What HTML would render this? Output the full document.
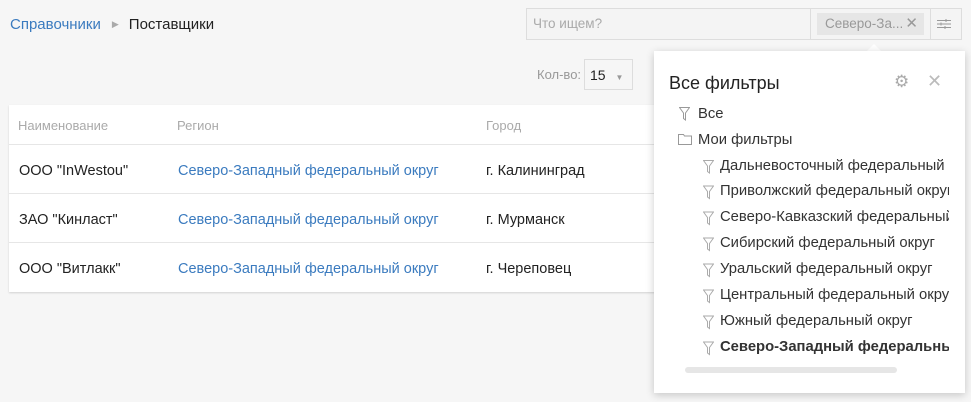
<!DOCTYPE html>
<html><head><meta charset="utf-8"><style>
*{box-sizing:border-box;margin:0;padding:0}
body{width:971px;height:402px;background:#f6f6f6;font-family:"Liberation Sans","DejaVu Sans",sans-serif;font-size:13px;color:#222;position:relative;overflow:hidden}
.abs{position:absolute}
.bc{left:10px;top:16px;font-size:15px}
.bc a{color:#3b7bbf}
.search{left:526px;top:8px;width:436px;height:32px;border:1px solid #ddd;background:#f4f4f4}
.search .ph{left:6px;top:7px;color:#aaa;font-size:13.5px}
.search .div1{left:283px;top:0;width:1px;height:30px;background:#ddd}
.search .div2{left:403px;top:0;width:1px;height:30px;background:#ddd}
.chip{left:290px;top:4px;width:107px;height:22px;background:#e6e6e6;color:#999;font-size:13.5px;padding:3px 0 0 8px}
.tbl{left:9px;top:105px;width:660px;height:187px;background:#fff;box-shadow:0 1px 2px rgba(0,0,0,.15)}
.row{position:absolute;left:0;width:660px;border-bottom:1px solid #e6e6e6}
.row span{position:absolute;font-size:14.5px}
.hd span{color:#aaa;font-size:13px}
.lnk{color:#3b7bbf}
.pop{left:654px;top:51px;width:311px;height:342px;background:#fff;box-shadow:0 2px 8px rgba(0,0,0,.2)}
.pop .it{position:absolute;left:66px;font-size:14.8px;color:#333;white-space:nowrap;width:229px;overflow:hidden}
</style></head><body>
<div class="abs bc"><a>Справочники</a><span style="color:#aaa;font-size:9px;margin:0 10px 0 11px;position:relative;top:-2px">▶</span><span>Поставщики</span></div>
<div class="abs search">
<div class="abs ph">Что ищем?</div>
<div class="abs div1"></div>
<div class="abs chip">Северо-За...<span style="position:absolute;right:6px;top:1px;font-size:15px">✕</span></div>
<div class="abs div2"></div>
<svg class="abs" style="left:410px;top:9px" width="14" height="12" viewBox="0 0 14 12" stroke="#999" fill="none"><path d="M0 2.5h14M0 6h14M0 9.5h14M9 1v3M4 4.5v3M8 8v3"/></svg>
</div>
<div class="abs" style="left:537px;top:67px;color:#999">Кол-во:</div>
<div class="abs" style="left:584px;top:59px;width:49px;height:31px;border:1px solid #ddd;background:#f6f6f6;padding:7px 0 0 5px;font-size:14px">15 <span style="color:#999;font-size:8px;margin-left:6px">▼</span></div>
<div class="abs tbl">
<div class="row hd" style="top:0;height:40px"><span style="left:9px;top:13px">Наименование</span><span style="left:168px;top:13px">Регион</span><span style="left:477px;top:13px">Город</span></div>
<div class="row" style="top:40px;height:49px"><span style="left:10px;top:18px">ООО "InWestou"</span><span class="lnk" style="left:169px;top:18px">Северо-Западный федеральный округ</span><span style="left:477px;top:18px">г. Калининград</span></div>
<div class="row" style="top:89px;height:49px"><span style="left:10px;top:18px">ЗАО "Кинласт"</span><span class="lnk" style="left:169px;top:18px">Северо-Западный федеральный округ</span><span style="left:477px;top:18px">г. Мурманск</span></div>
<div class="row" style="top:138px;height:49px;border:none"><span style="left:10px;top:18px">ООО "Витлакк"</span><span class="lnk" style="left:169px;top:18px">Северо-Западный федеральный округ</span><span style="left:477px;top:18px">г. Череповец</span></div>
</div>
<div class="abs" style="left:866px;top:44px;width:0;height:0;border-left:8px solid transparent;border-right:8px solid transparent;border-bottom:8px solid #fff"></div>
<div class="abs pop">
<div class="abs" style="left:15px;top:22px;font-size:18px;color:#222">Все фильтры</div>
<div class="abs" style="left:240px;top:21px;color:#aaa;font-size:17px">⚙</div>
<div class="abs" style="left:273px;top:20px;color:#bbb;font-size:18px">✕</div>
<svg class="abs" style="left:25px;top:56px" width="11" height="14" viewBox="0 0 11 14" fill="none" stroke="#999"><path d="M.5 .5h10L6.5 6v7l-2-1.5V6z"/></svg>
<div class="abs" style="left:44px;top:55px;font-size:14.8px;color:#333">Все</div>
<svg class="abs" style="left:24px;top:83px" width="14" height="11" viewBox="0 0 14 11" fill="none" stroke="#999"><path d="M.5 .5h5l1 1.5h7v8.5H.5z"/></svg>
<div class="abs" style="left:44px;top:81px;font-size:14.8px;color:#333">Мои фильтры</div>
<div class="it" style="top:107px">Дальневосточный федеральный округ</div>
<div class="it" style="top:132px">Приволжский федеральный округ</div>
<div class="it" style="top:158px">Северо-Кавказский федеральный округ</div>
<div class="it" style="top:184px">Сибирский федеральный округ</div>
<div class="it" style="top:210px">Уральский федеральный округ</div>
<div class="it" style="top:236px">Центральный федеральный округ</div>
<div class="it" style="top:262px">Южный федеральный округ</div>
<div class="it" style="top:288px;font-weight:bold">Северо-Западный федеральный округ</div>
<svg class="abs" style="left:49px;top:107px" width="11" height="200" viewBox="0 0 11 200" fill="none" stroke="#aaa">
<g id="f"><path d="M.5 2.5h10L6.5 8v7l-2-1.5V8z"/></g>
<use href="#f" y="25.5"/><use href="#f" y="51.5"/><use href="#f" y="77.5"/><use href="#f" y="103.5"/><use href="#f" y="129.5"/><use href="#f" y="155.5"/><use href="#f" y="181.5"/>
</svg>
<div class="abs" style="left:31px;top:316px;width:212px;height:6px;border-radius:3px;background:#e6e6e6"></div>
</div>
</body></html>
